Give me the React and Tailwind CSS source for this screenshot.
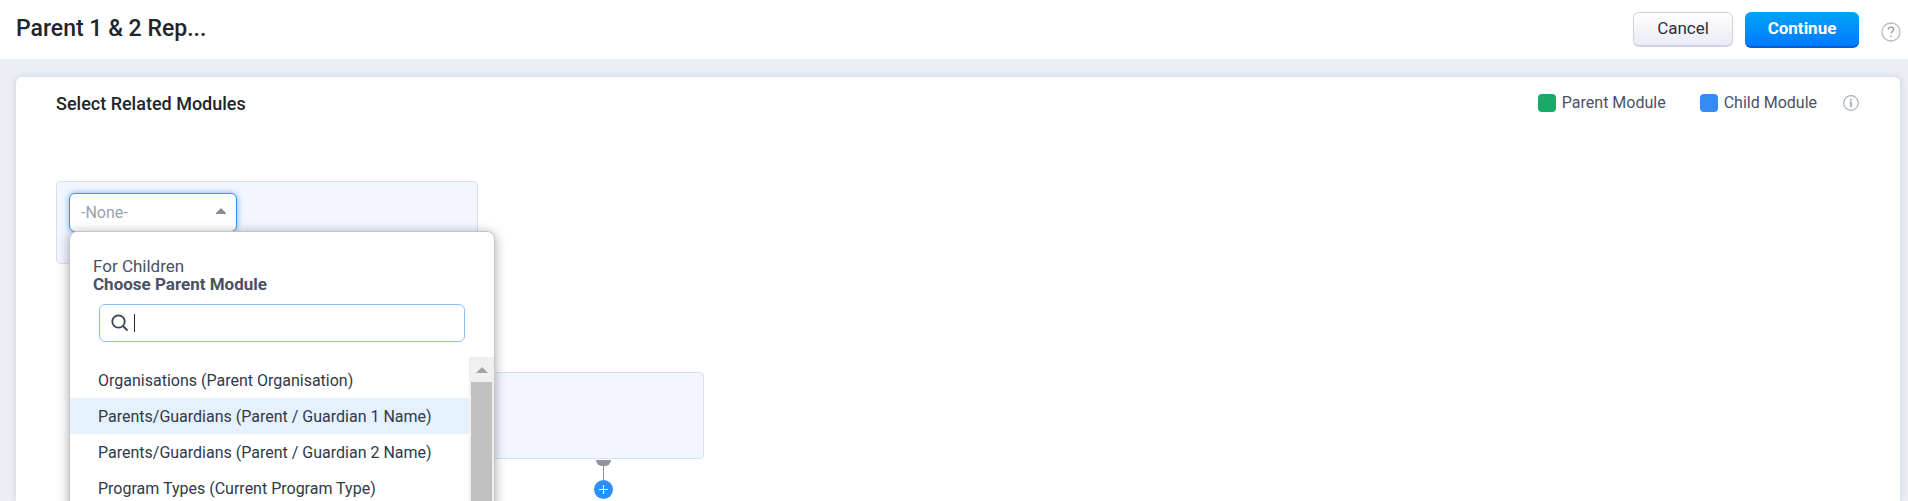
import React, { useState } from 'react';

const parentModules = [
  'Organisations (Parent Organisation)',
  'Parents/Guardians (Parent / Guardian 1 Name)',
  'Parents/Guardians (Parent / Guardian 2 Name)',
  'Program Types (Current Program Type)',
];

const HelpIcon = () => (
  <svg width="20" height="20" viewBox="0 0 20 20" fill="none" stroke="#b9b9b9" strokeWidth="1.3">
    <circle cx="10" cy="10" r="9" />
    <path d="M7.2 7.6c0-1.5 1.2-2.5 2.8-2.5s2.8 1 2.8 2.4c0 1.9-2.7 2-2.7 4.1" stroke="#999" />
    <path d="M10.1 13.4v1.5" stroke="#999" />
  </svg>
);

const InfoIcon = () => (
  <svg width="16" height="16" viewBox="0 0 16 16" fill="none" stroke="#a3b1bd">
    <circle cx="8" cy="8" r="7.3" strokeWidth="1.2" />
    <path d="M6.6 7.3H8M8 6.8v5.4M8 3.8v1.9" strokeWidth="1.8" />
  </svg>
);

const SearchIcon = () => (
  <svg width="18" height="18" viewBox="0 0 18 18" fill="none" stroke="#3c4353" strokeWidth="1.8" className="shrink-0">
    <circle cx="7.5" cy="7.5" r="6.2" />
    <path d="M12 12l4.5 4.5" />
  </svg>
);

const Legend = ({ swatch, label }) => (
  <span className="flex items-center gap-[6px]">
    <span className={`size-[18px] rounded ${swatch}`}></span>
    {label}
  </span>
);

const ModuleMenu = ({ active, onPick }) => {
  const [query, setQuery] = useState('');
  const rows = parentModules.filter((m) => m.toLowerCase().includes(query.toLowerCase()));

  return (
    <div className="absolute left-3 top-[49px] z-10 w-[426px] rounded-lg border border-[#c4c6cb] bg-white shadow-[0_2px_12px_rgba(0,0,0,0.35)]">
      <div className="px-[23px] pt-[25px] text-[17px] leading-[18px] text-[#4a5164]">
        <p>For Children</p>
        <p className="font-bold">Choose Parent Module</p>
      </div>
      <label className="mx-[29px] mt-[11px] flex h-[38px] items-center rounded-md border border-[#8dbdf9] pl-[11px]">
        <SearchIcon />
        {query === '' && <span className="ml-[5px] h-[18px] w-px shrink-0 bg-[#1f2940]"></span>}
        <input
          aria-label="Search modules"
          value={query}
          onChange={(e) => setQuery(e.target.value)}
          className="w-full bg-transparent pl-1 text-base text-[#313949] outline-none"
        />
      </label>
      <div className="mt-[15px] flex h-[300px]">
        <ul role="listbox" className="flex-1 pt-[5px]">
          {rows.map((m) => (
            <li key={m}>
              <button
                onClick={() => onPick(m)}
                className={`block h-9 w-full pl-7 pt-[2px] text-left text-base text-[#313949] ${m === active ? 'bg-[#e5f1fd]' : 'bg-white'}`}
              >
                {m}
              </button>
            </li>
          ))}
        </ul>
        {/* scrollbar */}
        <div className="flex w-[25px] flex-col bg-[#f0f0f0]">
          <div className="flex h-[25px] items-center justify-center">
            <svg width="12" height="6" viewBox="0 0 12 6"><path d="M6 0l6 6H0z" fill="#a3a3a3" /></svg>
          </div>
          <div className="mx-[2px] h-[200px] bg-[#c1c1c1]"></div>
        </div>
      </div>
    </div>
  );
};

const App = () => {
  const [active, setActive] = useState(parentModules[1]);

  return (
    <div className="flex h-screen flex-col overflow-hidden bg-[#ebeef3] font-['Roboto','Liberation_Sans',sans-serif]">
      <header className="flex h-[59px] shrink-0 items-center bg-white pl-4 pr-[7px]">
        <h1 className="flex-1 text-[23px] font-medium text-[#212529]">Parent 1 &amp; 2 Rep...</h1>
        <button className="mr-3 h-[35px] w-[100px] rounded-md border border-b-2 border-[#d0d2e2] bg-linear-to-b from-white to-[#e9ebf5] text-[17px] text-[#2b2e3b]">
          Cancel
        </button>
        <button className="mr-[22px] h-9 w-[114px] rounded-md border-b-2 border-[#0060d2] bg-linear-to-b from-[#04a3f7] to-[#0279ff] text-[17px] font-bold text-white">
          Continue
        </button>
        <button aria-label="Help" className="pt-1"><HelpIcon /></button>
      </header>

      <main className="ml-4 mr-2 mt-[18px] flex-1 rounded-t-md bg-white px-10 pt-4 shadow-[0_0_6px_rgba(150,175,205,0.45)]">
        <div className="flex h-5 items-center justify-between">
          <h2 className="text-[18px] font-medium text-[#212529]">Select Related Modules</h2>
          <div className="flex items-center text-base text-[#4a5164]">
            <Legend swatch="bg-[#18ab68]" label="Parent Module" />
            <span className="w-[34px]"></span>
            <Legend swatch="bg-[#338cf0]" label="Child Module" />
            <button aria-label="About modules" className="ml-[26px] mr-px"><InfoIcon /></button>
          </div>
        </div>

        {/* diagram canvas */}
        <div className="relative mt-17">
          <div className="absolute left-0 top-0 h-[83px] w-[422px] rounded border border-[#d5e0ec] bg-[#f3f6ff]">
            <div className="relative ml-3 mt-[11px] w-[168px]">
              <select
                aria-label="Parent module"
                className="h-[39px] w-full appearance-none rounded-md border border-[#3d95f7] bg-white pl-[11px] text-base text-[#9aa1ad] shadow-[0_0_6px_rgba(61,149,247,0.7)] outline-none"
              >
                <option>-None-</option>
              </select>
              <svg className="absolute right-[11px] top-[15px]" width="10" height="6" viewBox="0 0 10 6"><path d="M5 0l5 5v1H0V5z" fill="#868b97" /></svg>
            </div>
            <ModuleMenu active={active} onPick={setActive} />
          </div>
          <div className="absolute left-[226px] top-[191px] h-[87px] w-[422px] rounded border border-[#d5e0ec] bg-[#f3f6ff]"></div>
          <div className="absolute left-[537px] top-[279px] flex w-5 flex-col items-center">
            <div className="h-[6px] w-[15px] rounded-b-md bg-[#90949c]"></div>
            <div className="h-[14px] w-px bg-[#90949c]"></div>
            <button aria-label="Add module" className="flex size-[19px] items-center justify-center rounded-full bg-[#2d8ffb]">
              <svg width="9" height="9" viewBox="0 0 9 9" stroke="#fff"><path d="M4.5 0v9M0 4.5h9" /></svg>
            </button>
          </div>
        </div>
      </main>
    </div>
  );
};

export default App;
